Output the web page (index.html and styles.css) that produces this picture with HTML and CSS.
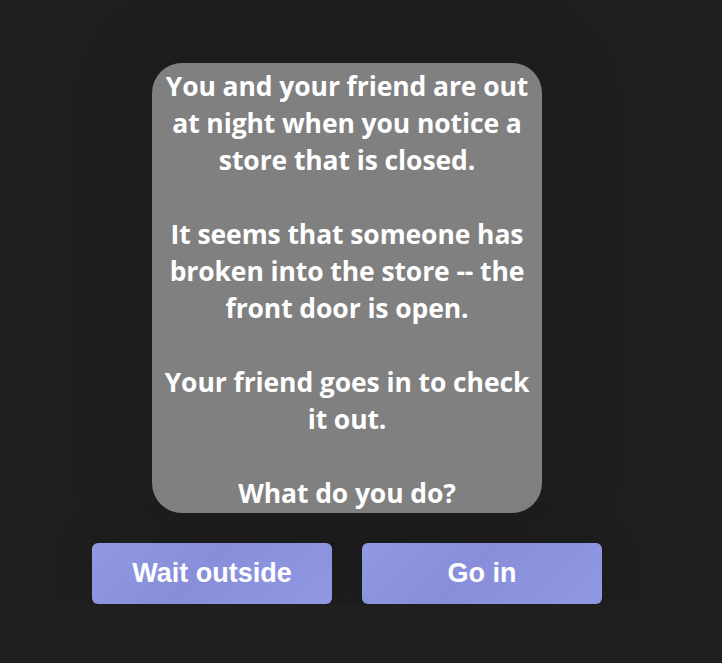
FILE: index.html
```html
<!DOCTYPE html>
<html lang="en">
<head>
<meta charset="utf-8">
<title>Story</title>
<link rel="stylesheet" href="styles.css">
</head>
<body>
<main class="stage">
  <section class="card">
    <p class="para">You and your friend are out at night when you notice a store that is closed.</p>
    <p class="para">It seems that someone has broken into the store -- the front door is open.</p>
    <p class="para">Your friend goes in to check it out.</p>
    <p class="para">What do you do?</p>
  </section>
  <div class="choices">
    <button class="choice">Wait outside</button>
    <button class="choice">Go in</button>
  </div>
</main>
</body>
</html>
```

FILE: styles.css
```css
html, body {
  margin: 0;
  padding: 0;
  background: #1f1f1f;
}
.stage {
  width: 694px;
  padding-top: 63px;
  display: flex;
  flex-direction: column;
  align-items: center;
  gap: 30px;
}
.card {
  box-sizing: border-box;
  width: 390px;
  height: 450px;
  padding: 5px 7px 1px;
  background: #808080;
  border-radius: 30px;
  box-shadow: 0 0 80px 16px rgba(0, 0, 0, 0.1);
  color: #fff;
  font-family: "Open Sans", sans-serif;
  font-weight: 700;
  font-size: 26.5px;
  letter-spacing: -0.1px;
  line-height: 37px;
  text-align: center;
  display: flex;
  flex-direction: column;
  gap: 37px;
}
.para {
  margin: 0;
}
.choices {
  display: flex;
  gap: 30px;
}
.choice {
  width: 240px;
  height: 61px;
  border: none;
  border-radius: 6px;
  background: linear-gradient(135deg, #9199e3 0%, #888ed9 45%, #9199e4 100%);
  box-shadow: 0 0 40px 6px rgba(0, 0, 0, 0.1);
  color: #fff;
  font-family: "Liberation Sans", Arial, sans-serif;
  font-weight: 700;
  font-size: 27px;
  padding: 0;
}
```
